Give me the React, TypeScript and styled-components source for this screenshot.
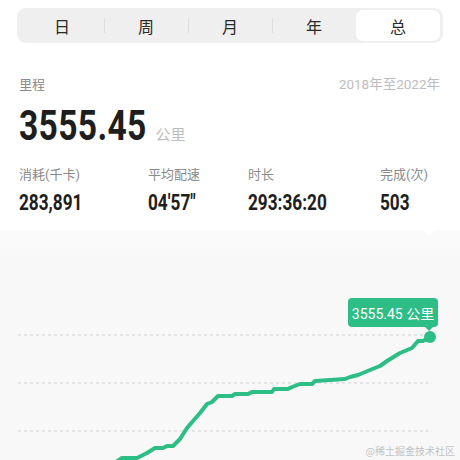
import React from "react";
import styled, { createGlobalStyle } from "styled-components";

const GlobalStyle = createGlobalStyle`
  html, body {
    margin: 0;
    padding: 0;
    background: #ffffff;
    font-family: "Roboto", "Noto Sans CJK SC", sans-serif;
  }
`;

const Page = styled.div`
  width: 460px;
  height: 460px;
  overflow: hidden;
  display: flex;
  flex-direction: column;
  background: #ffffff;
`;

const Tabs = styled.div`
  flex-shrink: 0;
  margin: 8px 17px 0;
  height: 35px;
  display: flex;
  align-items: stretch;
  padding: 2px 3px;
  box-sizing: border-box;
  background: #efefef;
  border-radius: 9px;
`;

const Tab = styled.div<{ active?: boolean; divider?: boolean }>`
  flex: 1;
  position: relative;
  display: flex;
  align-items: center;
  justify-content: center;
  font-family: "Noto Sans CJK SC", sans-serif;
  font-size: 16px;
  color: #2a2a2a;
  border-radius: 7px;
  background: ${(p) => (p.active ? "#ffffff" : "transparent")};
  &::before {
    content: "";
    position: absolute;
    left: 0;
    top: 8px;
    bottom: 8px;
    width: 1px;
    background: ${(p) => (p.divider ? "#dddddd" : "transparent")};
  }
`;

const Summary = styled.div`
  flex-shrink: 0;
  padding: 0 19px 0 19px;
  display: flex;
  flex-direction: column;
`;

const HeadRow = styled.div`
  margin-top: 29px;
  display: flex;
  justify-content: space-between;
  align-items: center;
  height: 22px;
`;

const Label = styled.span`
  font-size: 13px;
  color: #8a8a8a;
  font-family: "Roboto", "Noto Sans CJK SC", sans-serif;
`;

const Range = styled.span`
  font-size: 13.5px;
  color: #bdbdbd;
  margin-right: 1px;
  font-family: "Roboto", "Noto Sans CJK SC", sans-serif;
`;

const Total = styled.div`
  margin-top: 7px;
  display: flex;
  align-items: baseline;
  height: 52px;
`;

const Condensed = styled.span<{ shrink: number }>`
  display: inline-block;
  font-family: "Roboto", sans-serif;
  font-weight: 700;
  color: #1e1e1e;
  transform: scaleX(0.8);
  transform-origin: left center;
  margin-right: ${(p) => -p.shrink}px;
`;

const BigNumber = styled(Condensed)`
  font-size: 42px;
  letter-spacing: 0.4px;
`;

const Unit = styled.span`
  margin-left: 9px;
  font-size: 15px;
  color: #bdbdbd;
  font-family: "Noto Sans CJK SC", sans-serif;
`;

const Stats = styled.div`
  margin-top: 11px;
  display: grid;
  grid-template-columns: 129px 100px 132px 1fr;
`;

const Stat = styled.div`
  display: flex;
  flex-direction: column;
  gap: 7px;
`;

const StatValue = styled(Condensed)`
  font-size: 21.5px;
`;

const Chart = styled.div`
  position: relative;
  margin-top: 15px;
  flex: 1;
  min-height: 0;
  overflow: hidden;
  background: linear-gradient(#fbfbfb, #f8f8f8 30px, #f8f8f8);
`;

const Plot = styled.svg`
  display: block;
`;

const Notch = styled.div`
  position: absolute;
  top: 0;
  left: 423px;
  width: 0;
  height: 0;
  border-left: 6px solid transparent;
  border-right: 6px solid transparent;
  border-top: 5px solid #ffffff;
`;

const Tip = styled.div`
  position: absolute;
  left: 348px;
  top: 68px;
  width: 90px;
  height: 29px;
  box-sizing: border-box;
  background: #2dbe86;
  border-radius: 4px;
  color: #ffffff;
  font-size: 14px;
  display: flex;
  align-items: center;
  justify-content: center;
  font-family: "Roboto", "Noto Sans CJK SC", sans-serif;
  &::after {
    content: "";
    position: absolute;
    left: 77px;
    bottom: -4px;
    border-left: 4px solid transparent;
    border-right: 4px solid transparent;
    border-top: 4px solid #2dbe86;
  }
`;

const Watermark = styled.div`
  position: absolute;
  right: 5px;
  bottom: 2px;
  font-size: 10px;
  line-height: 14px;
  color: #c2c2c2;
  font-family: "Noto Sans CJK SC", sans-serif;
`;

const points: [number, number][] = [
  [116, 462], [122, 458], [137, 458], [147, 453], [155, 448], [163, 448],
  [167, 446], [173, 446], [180, 439], [187, 428], [193, 421], [200, 413],
  [207, 404], [212, 402], [218, 396], [232, 396], [235, 394], [248, 394],
  [252, 392], [272, 392], [274, 389], [288, 389], [292, 387], [300, 384],
  [312, 384], [315, 381], [345, 379], [350, 377], [358, 375], [370, 370],
  [380, 366], [387, 361], [400, 353], [412, 348], [418, 341], [423, 341],
  [430, 337],
];

const top = 230;

const tabs = ["日", "周", "月", "年", "总"];

const stats = [
  { label: "消耗(千卡)", value: "283,891", shrink: 16 },
  { label: "平均配速", value: "04'57\"", shrink: 12 },
  { label: "时长", value: "293:36:20", shrink: 20 },
  { label: "完成(次)", value: "503", shrink: 8 },
];

export default function App() {
  const line = points.map(([x, y]) => `${x},${y - top}`).join(" ");
  return (
    <Page>
      <GlobalStyle />
      <Tabs>
        {tabs.map((t, i) => (
          <Tab key={t} active={i === 4} divider={i > 0 && i < 4}>
            {t}
          </Tab>
        ))}
      </Tabs>
      <Summary>
        <HeadRow>
          <Label>里程</Label>
          <Range>2018年至2022年</Range>
        </HeadRow>
        <Total>
          <BigNumber shrink={32}>3555.45</BigNumber>
          <Unit>公里</Unit>
        </Total>
        <Stats>
          {stats.map((s) => (
            <Stat key={s.label}>
              <Label>{s.label}</Label>
              <StatValue shrink={s.shrink}>{s.value}</StatValue>
            </Stat>
          ))}
        </Stats>
      </Summary>
      <Chart>
        <Notch />
        <Plot width="460" height="230" viewBox="0 0 460 230">
          {[105, 153, 201].map((y) => (
            <line
              key={y}
              x1="18"
              x2="428"
              y1={y}
              y2={y}
              stroke="#cfcfcf"
              strokeWidth="1"
              strokeDasharray="3 3"
            />
          ))}
          <polyline
            points={line}
            fill="none"
            stroke="#2dbe86"
            strokeWidth="4"
            strokeLinejoin="round"
            strokeLinecap="round"
          />
          <circle cx="430" cy={337 - top} r="6" fill="#2dbe86" />
        </Plot>
        <Tip>3555.45 公里</Tip>
        <Watermark>@稀土掘金技术社区</Watermark>
      </Chart>
    </Page>
  );
}
